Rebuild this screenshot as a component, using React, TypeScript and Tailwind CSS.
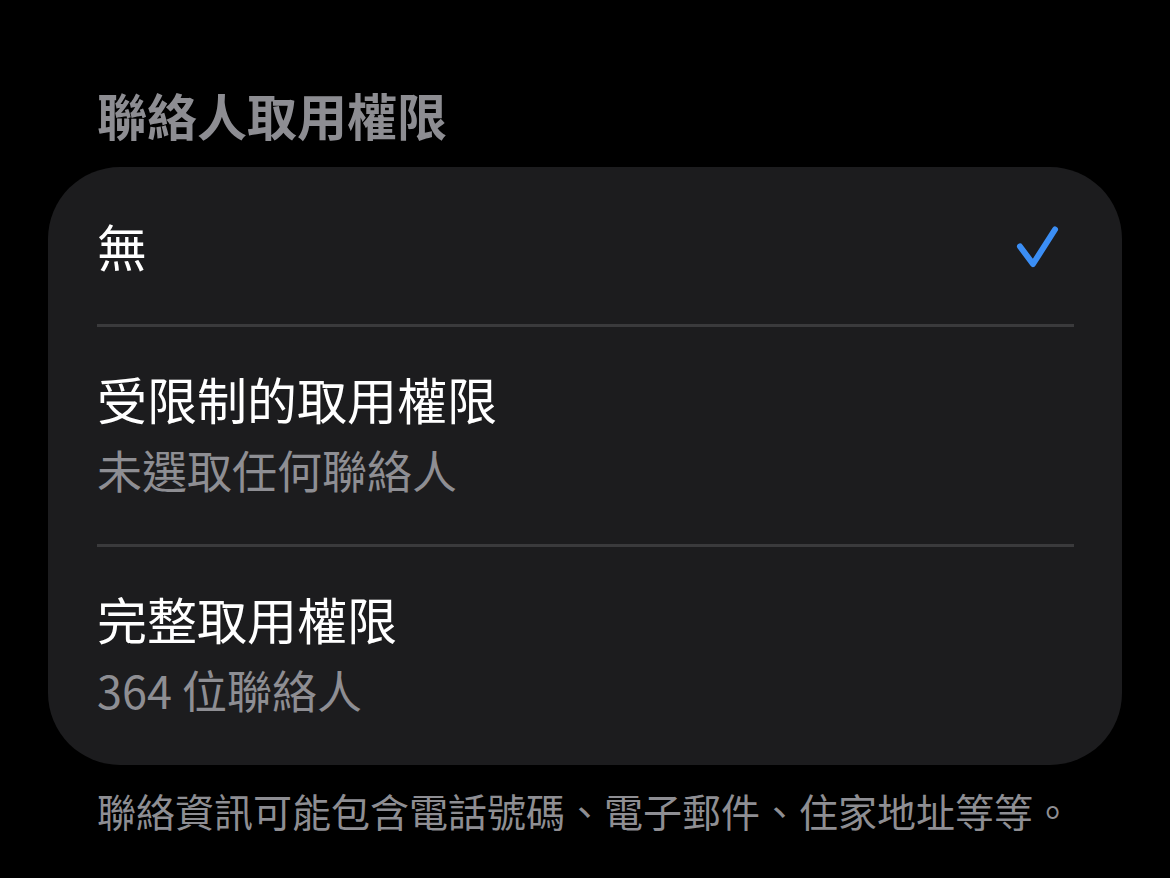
export default function App() {
  const font = { fontFamily: '"Noto Sans CJK TC", "Noto Sans", sans-serif' };
  return (
    <div className="min-h-screen w-full bg-black px-[48px] pt-[81px]" style={font}>
      {/* Section header */}
      <div className="px-[49px] text-[50px] leading-[66px] font-semibold text-[#8d8d92]">
        聯絡人取用權限
      </div>

      {/* Options card */}
      <div className="mt-[20px] rounded-[72px] bg-[#1c1c1e] pl-[49px] overflow-hidden">
        <div className="flex h-[157px] items-center justify-between pr-[58px]">
          <span className="text-[50px] leading-[67px] text-white">無</span>
          <svg width="48" height="48" viewBox="0 0 48 48" fill="none" className="mr-[2px]">
            <path
              d="M6 24.5 L19 42 L41 7.5"
              stroke="#3b8ef5"
              strokeWidth="6"
              strokeLinecap="round"
              strokeLinejoin="round"
            />
          </svg>
        </div>
        <div className="h-[3px] mr-[48px] bg-[#3a3a3c]" />
        <div className="flex h-[217px] flex-col justify-center pb-[6px] pt-[2px]">
          <span className="text-[50px] leading-[67px] text-white">受限制的取用權限</span>
          <span className="mt-[4px] text-[45px] leading-[67px] text-[#8e8e93]">未選取任何聯絡人</span>
        </div>
        <div className="h-[3px] mr-[48px] bg-[#3a3a3c]" />
        <div className="flex h-[218px] flex-col justify-center pb-[6px] pt-[2px]">
          <span className="text-[50px] leading-[67px] text-white">完整取用權限</span>
          <span className="mt-[4px] text-[45px] leading-[67px] text-[#8e8e93]">364 位聯絡人</span>
        </div>
      </div>

      {/* Footer note */}
      <div className="mt-[18px] pl-[49px] text-[39px] leading-[54px] whitespace-nowrap text-[#8e8e93]">
        聯絡資訊可能包含電話號碼、電子郵件、住家地址等等。
      </div>
    </div>
  );
}
